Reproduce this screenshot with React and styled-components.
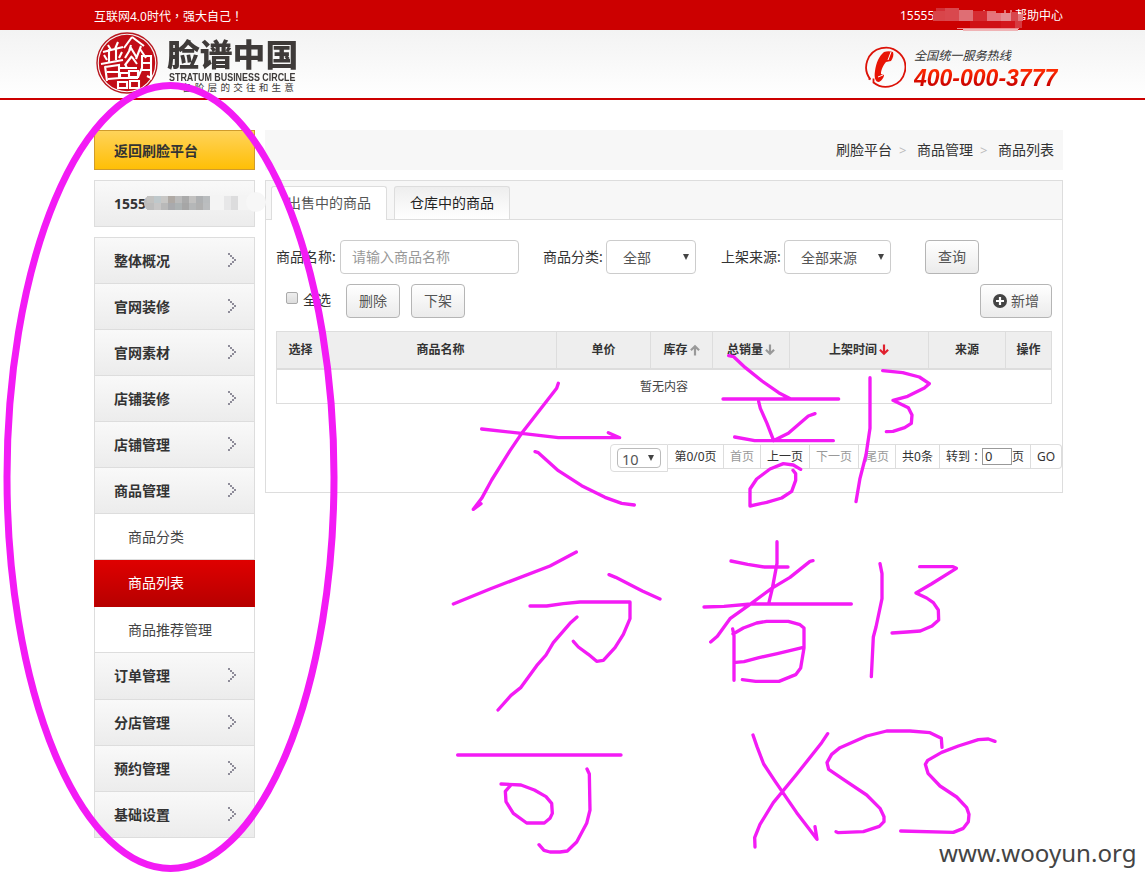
import React from 'react';
import styled, { createGlobalStyle, css } from 'styled-components';

const GlobalStyle = createGlobalStyle`
  * { box-sizing: border-box; }
  body {
    margin: 0;
    background: #fff;
    color: #333;
    font: 14px/20px "Noto Sans", "Noto Sans CJK SC", sans-serif;
    overflow: hidden;
  }
`;

const Page = styled.div`
  position: relative;
  width: 1145px;
  height: 883px;
  overflow: hidden;
  white-space: nowrap;
`;

const Container = styled.div`
  width: 969px;
  margin-left: 94px;
  display: flex;
  justify-content: space-between;
`;

const TopBar = styled.div`
  height: 30px;
  background: #cc0000;
  color: #fff;
  font-size: 12px;
  line-height: 31px;
`;

const Punctuation = styled.span`
  font-family: "Noto Sans CJK TC", sans-serif;
`;

const Account = styled.div`
  width: 163px;
  display: flex;
  justify-content: space-between;
`;

const Header = styled.header`
  height: 70px;
  border-bottom: 2px solid #cc0000;
  background: linear-gradient(#f3f3f3, #fff);
`;

const Brand = styled.div`
  display: flex;
  padding: 2px 0 0 2px;
`;

const BrandText = styled.div`
  width: 140px;
  margin-left: 9px;
  padding-top: 6px;
  color: #3e3a39;
`;

const BrandName = styled.div`
  font: 900 32.8px/32px "Noto Sans CJK SC", sans-serif;
  height: 33px;
  transform: scaleY(0.93);
  transform-origin: 0 0;
`;

const BrandEnglish = styled.div`
  width: 165px;
  font: bold 11.7px/12px "Liberation Sans", sans-serif;
  padding-left: 2px;
  height: 12px;
  transform: scaleX(0.762);
  transform-origin: 2px 0;
`;

const BrandSlogan = styled.div`
  font-size: 9.6px;
  line-height: 10px;
  letter-spacing: 3.2px;
  padding-left: 15px;
`;

const Hotline = styled.div`
  display: flex;
  width: 199px;
  padding-top: 16px;
  svg { flex: none; }
`;

const HotlineText = styled.div`
  margin-left: 8px;
  padding-top: 1px;
  font-style: italic;
`;

const HotlineLabel = styled.div`
  font-size: 12.1px;
  line-height: 18px;
`;

const HotlineNumber = styled.div`
  font: italic bold 23px/26px "Liberation Sans", sans-serif;
  background: linear-gradient(#ff2a00 20%, #c80000 80%);
  background-clip: text;
  color: transparent;
  width: 149px;
`;

const Body = styled(Container)`
  padding-top: 30px;
  align-items: flex-start;
`;

const Sidebar = styled.aside`
  width: 161px;
  display: flex;
  flex-direction: column;
  gap: 10px;
`;

const sideBox = css`
  border: 1px solid #ddd;
  background: linear-gradient(#f9f9f9, #ececec);
  padding-left: 19px;
  font-weight: bold;
`;

const BackButton = styled.div`
  ${sideBox}
  height: 40px;
  line-height: 40px;
  border-color: #d09b2c;
  background: linear-gradient(#ffd35a, #ffbf06);
`;

const User = styled.div`
  ${sideBox}
  height: 47px;
  line-height: 45px;
`;

const Menu = styled.nav`
  border-bottom: 1px solid #ddd;
`;

const MenuItem = styled.div`
  ${sideBox}
  height: ${(p) => p.$h || 46}px;
  line-height: 45px;
  border-bottom: 0;
  display: flex;
  justify-content: space-between;
  padding-right: 17px;
  svg { margin-top: 15px; }
`;

const SubItem = styled.div`
  height: ${(p) => p.$h}px;
  line-height: 46px;
  padding-left: 33px;
  border: 1px solid ${(p) => (p.$active ? '#cc0000' : '#ddd')};
  border-width: ${(p) => (p.$edged ? '1px' : '0 1px')};
  color: ${(p) => (p.$active ? '#fff' : '#444')};
  background: ${(p) => (p.$active ? 'linear-gradient(#df0000, #b60000)' : '#fff')};
`;

const Main = styled.main`
  width: 798px;
`;

const Breadcrumb = styled.div`
  height: 40px;
  background: #f7f7f7;
  display: flex;
  justify-content: flex-end;
  padding-right: 9px;
  line-height: 40px;
`;

const Separator = styled.span`
  width: 25px;
  padding-left: 7px;
  color: #bbb;
  font-size: 13px;
`;

const Panel = styled.section`
  margin-top: 10px;
  height: 313px;
  border: 1px solid #ddd;
`;

const Tabs = styled.div`
  height: 39px;
  padding: 5px 5px 0;
  display: flex;
  gap: 7px;
  background: #f7f7f7;
  border-bottom: 1px solid #ddd;
`;

const Tab = styled.div`
  width: 116px;
  height: ${(p) => (p.$active ? 34 : 33)}px;
  border: 1px solid #ddd;
  border-bottom: 0;
  border-radius: 3px 3px 0 0;
  background: ${(p) => (p.$active ? '#fff' : 'linear-gradient(#eee, #fff)')};
  color: ${(p) => (p.$active ? '#555' : '#222')};
  text-align: center;
  line-height: 32px;
`;

const Filters = styled.div`
  display: flex;
  padding: 20px 0 0 10px;
  line-height: 33px;
`;

const Label = styled.span`
  width: ${(p) => p.$w}px;
  flex: none;
`;

const Input = styled.div`
  width: 179px;
  height: 34px;
  border: 1px solid #ccc;
  border-radius: 4px;
  padding-left: 11px;
  line-height: 32px;
  color: #999;
  margin-right: 24px;
`;

const Select = styled.div`
  width: ${(p) => p.$w}px;
  height: 34px;
  border: 1px solid #ccc;
  border-radius: 4px;
  padding: 0 6px 0 16px;
  display: flex;
  justify-content: space-between;
  line-height: 34px;
  color: #555;
  margin-right: ${(p) => p.$gap}px;
`;

const Caret = styled.span`
  width: 0;
  height: 0;
  border: 3px solid transparent;
  border-top: 6px solid #444;
  border-bottom: 0;
  margin-top: ${(p) => p.$top}px;
`;

const Button = styled.div`
  width: ${(p) => p.$w || 54}px;
  height: 34px;
  border: 1px solid #b5b5b5;
  border-radius: 4px;
  background: linear-gradient(#fff, #ebebeb);
  color: #555;
  display: flex;
  align-items: center;
  justify-content: center;
  gap: 4px;
  line-height: 32px;
`;

const Actions = styled.div`
  display: flex;
  padding: 10px 10px 0 20px;
  line-height: 32px;
`;

const Checkbox = styled.span`
  width: 12px;
  height: 12px;
  margin: 8px 5px 0 0;
  border: 1px solid #aaa;
  border-radius: 2px;
  background: linear-gradient(#eee, #ddd);
`;

const SelectAll = styled.span`
  width: 43px;
`;

const ActionGroup = styled.div`
  display: flex;
  gap: 11px;
  margin-right: auto;
`;

const Table = styled.div`
  margin: 13px 10px 0;
  border: 1px solid #ddd;
  font-size: 12px;
`;

const TableHead = styled.div`
  display: grid;
  grid-template-columns: 47px 232px 94px 62px 77px 139px 77px 1fr;
  height: 38px;
  border-bottom: 2px solid #ddd;
  background: #eee;
`;

const HeadCell = styled.div`
  border-left: ${(p) => (p.$first ? 0 : 1)}px solid #ddd;
  font-weight: bold;
  display: flex;
  align-items: center;
  justify-content: center;
  gap: 2px;
`;

const Empty = styled.div`
  height: 33px;
  line-height: 33px;
  text-align: center;
  color: #444;
`;

const Pager = styled.div`
  display: flex;
  align-items: flex-start;
  margin: 40px 0 0 344px;
  font-size: 12px;
`;

const PageSize = styled.div`
  width: 58px;
  height: 28px;
  border: 1px solid #ddd;
  border-radius: 4px 0 0 4px;
  padding: 3px 6px;
`;

const SizeSelect = styled.div`
  width: 44px;
  height: 20px;
  border: 1px solid #bbb;
  border-radius: 4px;
  display: flex;
  justify-content: space-between;
  padding: 0 6px 0 4px;
  font-size: 14.5px;
  line-height: 20px;
  color: #555;
`;

const PageCell = styled.div`
  width: ${(p) => p.$w}px;
  height: 25px;
  border: 1px solid #ddd;
  border-left: 0;
  border-radius: ${(p) => (p.$last ? '0 4px 4px 0' : '0')};
  color: ${(p) => (p.$muted ? '#999' : '#333')};
  display: flex;
  align-items: center;
  justify-content: center;
`;

const PageInput = styled.span`
  width: 30px;
  height: 17px;
  border: 1px solid #999;
  padding-left: 2px;
  line-height: 15px;
  font-size: 13px;
`;

const Watermark = styled.div`
  position: absolute;
  left: 939px;
  top: 835px;
  font-size: 24.1px;
  line-height: 36px;
  color: #444;
`;

const Overlay = styled.svg`
  position: absolute;
  left: 0;
  top: 0;
`;

const Seal = () => (
  <svg width="62" height="62" viewBox="0 0 62 62" fill="none">
    <circle cx="31" cy="31" r="30" stroke="#b81820" strokeWidth="1.4" />
    <circle cx="31" cy="31" r="28.2" fill="#c20d17" />
    <g stroke="#fff" strokeWidth="2.1">
      <path d="M12 13l3 5M22 10l-3 7M7 20l20-5M13 17v13M20 16v12M8 23l3 5M26 20l-3 6M5 32l22-4M9 34l2 15M9 35l14-2v14M11 40h12M12 47l12-1" />
      <path d="M36 5l-8 11M36 5l12 9M35 13l-2 6M29 26l6-10 6 10M45 14l-5 13M44 17l6 9M29 33l7-9M36 25l5 7" />
      <path d="M46 23v13l-4 9M46 24h9v22l-4-2M46 31h9M46 38h9" />
      <path d="M22 36h19M29 32l2 4M22 41h10M24 41v4M22 46h20M22 50h9v6h-9zM33 39h9v6h-9zM34 49h9v7h-9z" />
    </g>
  </svg>
);

const PhoneBadge = () => (
  <svg width="42" height="43" viewBox="0 0 42 43" fill="none">
    <path d="M6.5 33.5A19.6 19.6 0 1 1 9.5 36.5v-4M6.5 33.5l-2-1" stroke="#dc1208" strokeWidth="1.8" />
    <path d="M20 6c3-1 6-1 9 0 1 3 0 6-2 9l-5 1c-4 5-5 9-5 12l3 1c0 3-3 6-5 7-4 0-5-5-4-11 1-8 4-15 9-19z" fill="#e81405" />
    <path d="M27 6l-3 8M14 31l5-2" stroke="#fff" strokeWidth="1" />
  </svg>
);

const Chevron = () => (
  <svg width="9" height="15" viewBox="0 0 9 15" fill="#8e8c99" shapeRendering="crispEdges">
    {[0, 1, 2, 3, 4, 5, 6].map((i) => (
      <rect key={i} x={6 - Math.abs(i - 3) * 2} y={i * 2} width="2" height="2" />
    ))}
  </svg>
);

const SortArrow = ({ up, color }) => (
  <svg width="10" height="12" viewBox="0 0 11 12" fill="none" stroke={color} strokeWidth="2.4">
    <path d={up ? 'M5.5 12V2M1 6.2L5.5 1.8 10 6.2' : 'M5.5 0v10M1 5.8l4.5 4.4L10 5.8'} />
  </svg>
);

const PlusBadge = () => (
  <svg width="14" height="14" viewBox="0 0 14 14">
    <circle cx="7" cy="7" r="7" fill="#444" />
    <path d="M7 3v8M3 7h8" stroke="#fff" strokeWidth="2.2" />
  </svg>
);

const topBlocks = [
  [936, 8, 9, 3, '#d32f36'], [933, 11, 12, 10, '#d8454a'], [945, 8, 14, 13, '#d9484e'], [959, 10, 14, 11, '#df6e74'],
  [973, 11, 14, 10, '#d52c32'], [987, 13, 14, 8, '#e5747c'], [1001, 13, 10, 8, '#e58a90'], [1011, 12, 7, 9, '#d8464c'],
  [1018, 14, 5, 7, '#e0787e'], [970, 21, 31, 7, '#cf1015'], [1001, 21, 14, 7, '#d3161c'], [1015, 21, 7, 7, '#d63a40'],
  [957, 28, 62, 1, '#ee8b8f'], [963, 29, 55, 2, '#efb3b5'],
];

const userBlocks = [
  '#c3c2c0', '#bfc8cb', '#c8c7c5', '#afa9a4', '#bababa', '#aaa', '#c2c1c0', '#aeb0b2', '#b9bcbe',
  '#bdbdbd', '#c7c6c6', '#b9b9b9', '#a9aaad', '#adb2b3', '#a6a6a6', '#b5b7b8', '#b0b0b0', '#bbbdbf',
];

const Annotations = () => (
  <Overlay width="1145" height="883" viewBox="0 0 1145 883" fill="none">
    <path d="M982 12h14M984 10v3M1005 10v3M1011 10v3" stroke="#fbe3e3" />
    <g shapeRendering="crispEdges">
      {topBlocks.map(([x, y, w, h, c]) => <rect key={`${x}-${y}`} x={x} y={y} width={w} height={h} fill={c} />)}
    </g>
    <rect x="202" y="195" width="62" height="15" rx="7" fill="#f4f4f4" />
    <circle cx="256" cy="202" r="10" fill="#f7f7f7" />
    <rect x="144" y="196" width="20" height="14" rx="6" fill="#bdbdbd" />
    {userBlocks.map((c, i) => (
      <rect key={i} x={147 + (i % 9) * 7} y={i < 9 ? 196 : 203} width="7" height="7" fill={c} />
    ))}
    <rect x="224" y="196" width="7" height="14" fill="#e7e7e8" />
    <rect x="231" y="196" width="7" height="14" fill="#dcdcdd" />
    <g stroke="#f31bf5" strokeLinecap="round" strokeLinejoin="round">
      <ellipse cx="170.5" cy="477" rx="163.5" ry="391.5" strokeWidth="7" />
      <g strokeWidth="10">
        <path transform="translate(265 320) scale(.33333)" d="M880 190l-5 15L770 340 735 392 680 480 650 535 625 568 648 551M650 327l120 13 110 13h184L1030 338M810 395l10 3 60 54 70 45 70 35 50 18 38 5" />
        <path transform="translate(600 320) scale(.33333)" d="M386 107l15 3 35 33 50 40 50 35 35 18M369 237H716M476 245l5 20 20 45 20 52M404 351l60 11H700M520 362l45-22 60-52 20-7M810 173V325L798 405 780 475 768 545M848 152l60 6 50 13 30 20-15 13-50 25-44 12 46 22 11 22-2 25-20 13-35 11-20 1M602 448l-22-13-30-4-40 16-40 30-20 30v51l50-11 45-13 30-20 12-33v-20l-8-10" />
        <path transform="translate(440 530) scale(.33333)" d="M409 66l-79 42-180 69-90 37-20 8M507 134l20 8 80 41 53 24M270 228h50l50-7 50-5h150v50l-20 47-25 40-35 38-20 3-25-21-30-22-15-17M411 261l-21 19-50 58-22 37-28 32-47 65-30 24-39 44M53 675H543M183 762l60 3 40 15 35 20 17 20 2 30-7 15-17 14h-53l-40-29-22-35-2-31 15-17M441 717l7 15 2 108-10 40-30 56-28 27-22 3h-30l-18-5-15-17" />
        <path transform="translate(690 530) scale(.33333)" d="M261 35v65l-14 75-10 42M123 93l50 10 50 8h71M369 92l-9 2-60 48-55 33-65 48-60 43-38 53-20 17M42 231l60-2 80-7H484M128 297l4 20V451M129 312l31-18 40-15 30-5h65l35 10 12 10v60l-10 60-15 20-50 20h-70l-40-5M137 397l25-2 45-12 55-12 75-18M570 101l6 30v75l-18 85-8 30-6 119M689 110h100l10 5-75 47-46 27 32 15 20 14 15 22 1 30-20 18-35 15-40 3-45 3M189 615l12 35 20 52 35 53 64 93 61 80-6-38M413 611l-18 27-75 95-70 85-40 65-16 40 1 28M756 652l-2-27-34-17-60-5h-70l-60 15-80 35-25 20-14 25 5 20 44 30 70 47 40 40 12 25 0 15-14 14-48 16-75 3-7-3M915 634l-20-7-30 2-60 19-50 19-42 24-7 12 8 27 36 38 50 33 30 32 7 20-2 22-15 20-30 12-158-4" />
      </g>
    </g>
  </Overlay>
);

const beforeSub = ['整体概况', '官网装修', '官网素材', '店铺装修', '店铺管理', '商品管理'];
const afterSub = ['订单管理', '分店管理', '预约管理', '基础设置'];

export default function App() {
  return (
    <Page>
      <GlobalStyle />
      <TopBar>
        <Container>
          <span>互联网4.0时代<Punctuation>，</Punctuation>强大自己<Punctuation>！</Punctuation></span>
          <Account><span>15555</span><span>帮助中心</span></Account>
        </Container>
      </TopBar>
      <Header>
        <Container>
          <Brand>
            <Seal />
            <BrandText>
              <BrandName>脸谱中国</BrandName>
              <BrandEnglish>STRATUM BUSINESS CIRCLE</BrandEnglish>
              <BrandSlogan>各阶层的交往和生意</BrandSlogan>
            </BrandText>
          </Brand>
          <Hotline>
            <PhoneBadge />
            <HotlineText>
              <HotlineLabel>全国统一服务热线</HotlineLabel>
              <HotlineNumber>400-000-3777</HotlineNumber>
            </HotlineText>
          </Hotline>
        </Container>
      </Header>
      <Body>
        <Sidebar>
          <BackButton>返回刷脸平台</BackButton>
          <User>1555</User>
          <Menu>
            {beforeSub.map((t) => <MenuItem key={t}>{t}<Chevron /></MenuItem>)}
            <SubItem $h={47} $edged>商品分类</SubItem>
            <SubItem $h={47} $active>商品列表</SubItem>
            <SubItem $h={45}>商品推荐管理</SubItem>
            {afterSub.map((t, i) => <MenuItem key={t} $h={i === 0 ? 47 : 46}>{t}<Chevron /></MenuItem>)}
          </Menu>
        </Sidebar>
        <Main>
          <Breadcrumb>
            刷脸平台<Separator>&gt;</Separator>商品管理<Separator>&gt;</Separator>商品列表
          </Breadcrumb>
          <Panel>
            <Tabs>
              <Tab $active>出售中的商品</Tab>
              <Tab>仓库中的商品</Tab>
            </Tabs>
            <Filters>
              <Label $w={64}>商品名称:</Label>
              <Input>请输入商品名称</Input>
              <Label $w={63}>商品分类:</Label>
              <Select $w={90} $gap={25}>全部<Caret $top={13} /></Select>
              <Label $w={63}>上架来源:</Label>
              <Select $w={107} $gap={34}>全部来源<Caret $top={13} /></Select>
              <Button>查询</Button>
            </Filters>
            <Actions>
              <Checkbox />
              <SelectAll>全选</SelectAll>
              <ActionGroup>
                <Button>删除</Button>
                <Button>下架</Button>
              </ActionGroup>
              <Button $w={72}><PlusBadge />新增</Button>
            </Actions>
            <Table>
              <TableHead>
                <HeadCell $first>选择</HeadCell>
                <HeadCell>商品名称</HeadCell>
                <HeadCell>单价</HeadCell>
                <HeadCell>库存<SortArrow up color="#999" /></HeadCell>
                <HeadCell>总销量<SortArrow color="#999" /></HeadCell>
                <HeadCell>上架时间<SortArrow color="#e0202e" /></HeadCell>
                <HeadCell>来源</HeadCell>
                <HeadCell>操作</HeadCell>
              </TableHead>
              <Empty>暂无内容</Empty>
            </Table>
            <Pager>
              <PageSize><SizeSelect>10<Caret $top={6} /></SizeSelect></PageSize>
              <PageCell $w={56}>第0/0页</PageCell>
              <PageCell $w={37} $muted>首页</PageCell>
              <PageCell $w={49}>上一页</PageCell>
              <PageCell $w={49} $muted>下一页</PageCell>
              <PageCell $w={37} $muted>尾页</PageCell>
              <PageCell $w={44}>共0条</PageCell>
              <PageCell $w={91}>转到<Punctuation>：</Punctuation><PageInput>0</PageInput>页</PageCell>
              <PageCell $w={31} $last>GO</PageCell>
            </Pager>
          </Panel>
        </Main>
      </Body>
      <Watermark>www.wooyun.org</Watermark>
      <Annotations />
    </Page>
  );
}
